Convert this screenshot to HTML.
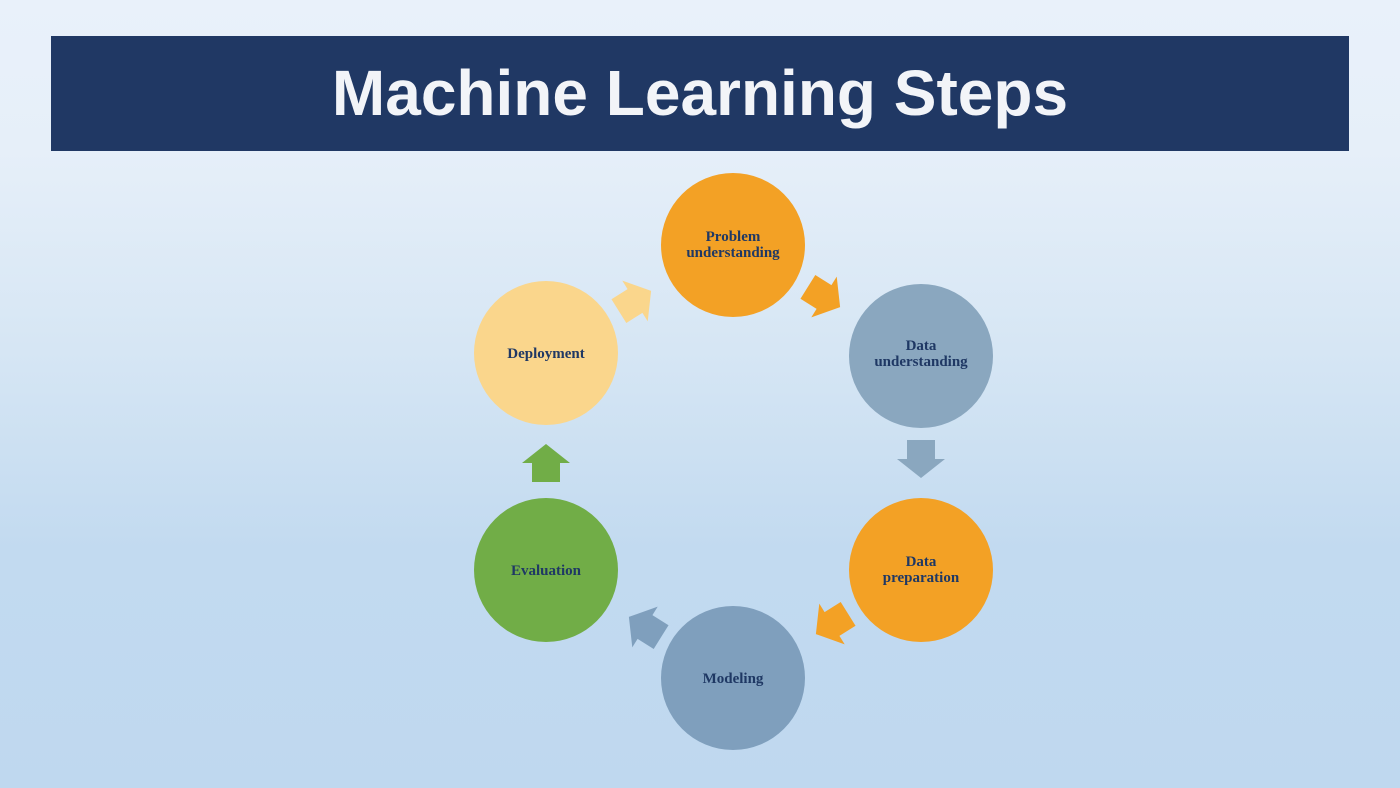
<!DOCTYPE html>
<html><head><meta charset="utf-8"><style>
html,body{margin:0;padding:0}
body{width:1400px;height:788px;overflow:hidden;position:relative;font-family:"Liberation Sans",sans-serif;
background:linear-gradient(#e9f1fa 0px,#e6eff9 150px,#d6e6f4 350px,#c2daf0 550px,#bfd8ef 788px);}
.hdr{position:absolute;left:51px;top:36px;width:1298px;height:115px;background:#203864;color:#f2f4f8;
font-weight:bold;font-size:64px;text-align:center;line-height:115px;letter-spacing:0px}
svg{position:absolute;left:0;top:0}
text{font-family:"Liberation Serif",serif;font-weight:bold;font-size:15px;fill:#1f3864;text-anchor:middle}
</style></head><body>
<div class="hdr">Machine Learning Steps</div>
<svg width="1400" height="788">
<defs><path id="ar" d="M-19,-14 L0,-14 L0,-24 L19,0 L0,24 L0,14 L-19,14 Z"/></defs>
<circle cx="733" cy="245" r="72" fill="#f3a125"/>
<circle cx="921" cy="356" r="72" fill="#8aa7bf"/>
<circle cx="921" cy="570" r="72" fill="#f3a125"/>
<circle cx="733" cy="678" r="72" fill="#7f9fbd"/>
<circle cx="546" cy="570" r="72" fill="#71ad47"/>
<circle cx="546" cy="353" r="72" fill="#fad68c"/>
<use href="#ar" fill="#fad68c" transform="translate(635,301) rotate(-32)"/>
<use href="#ar" fill="#f3a125" transform="translate(824,297) rotate(32)"/>
<use href="#ar" fill="#8aa7bf" transform="translate(921,459) rotate(90)"/>
<use href="#ar" fill="#f3a125" transform="translate(832,624) rotate(148)"/>
<use href="#ar" fill="#7f9fbd" transform="translate(645,627) rotate(212)"/>
<use href="#ar" fill="#71ad47" transform="translate(546,463) rotate(-90)"/>
<text x="733" y="241">Problem</text><text x="733" y="257">understanding</text>
<text x="921" y="350">Data</text><text x="921" y="366">understanding</text>
<text x="921" y="566">Data</text><text x="921" y="582">preparation</text>
<text x="733" y="683">Modeling</text>
<text x="546" y="575">Evaluation</text>
<text x="546" y="358">Deployment</text>
</svg>
</body></html>
